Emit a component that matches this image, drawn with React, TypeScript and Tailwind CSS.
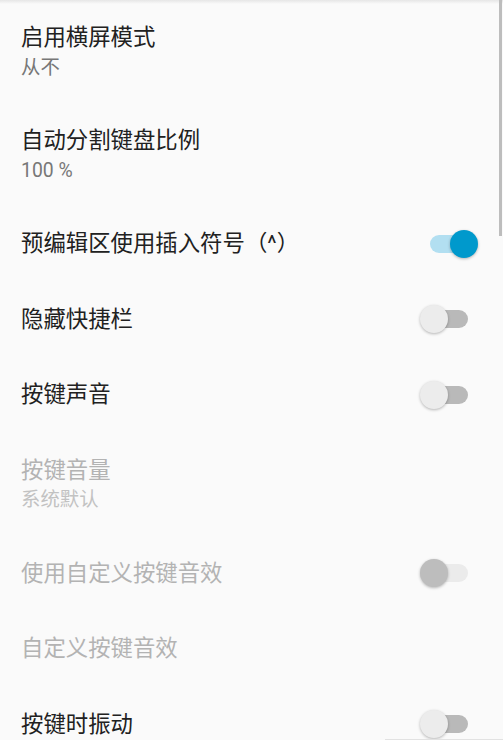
import React from "react";

type SwitchProps = { on?: boolean; disabled?: boolean };

function Switch({ on = false, disabled = false }: SwitchProps) {
  let track = "bg-[#b9b9b9]";
  let thumb = "bg-[#ececec]";
  if (on) {
    track = "bg-[#b2dff1]";
    thumb = "bg-[#0099cc]";
  } else if (disabled) {
    track = "bg-[#ebebeb]";
    thumb = "bg-[#bdbdbd]";
  }
  return (
    <div className="relative w-[58px] h-[28px] shrink-0">
      <div className={`absolute left-[10px] top-[5px] w-[38px] h-[18px] rounded-full ${track}`} />
      <div
        className={`absolute top-0 w-[28px] h-[28px] rounded-full shadow-[0_1px_3px_rgba(0,0,0,0.28)] ${thumb} ${
          on ? "left-[30px]" : "left-0"
        }`}
      />
    </div>
  );
}

type RowProps = {
  title: string;
  summary?: string;
  disabled?: boolean;
  toggle?: "on" | "off";
};

function Row({ title, summary, disabled = false, toggle }: RowProps) {
  return (
    <div className="flex items-center pl-[21px] pr-[25px] py-[22px]">
      <div className="flex-1 min-w-0 flex flex-col">
        <div
          className={`text-[22.4px] leading-[31.5px] ${disabled ? "text-[#b3b3b3]" : "text-[#212121]"}`}
        >
          {title}
        </div>
        {summary && (
          <div
            className={`text-[19.4px] leading-[27.5px] ${disabled ? "text-[#c2c2c2]" : "text-[#777777]"}`}
          >
            {summary}
          </div>
        )}
      </div>
      {toggle && <Switch on={toggle === "on"} disabled={disabled} />}
    </div>
  );
}

export default function App() {
  return (
    <div
      className="relative w-[503px] h-[740px] overflow-hidden bg-[#fafafa]"
      style={{ fontFamily: "Roboto, 'Noto Sans CJK SC', 'Noto Sans', sans-serif" }}
    >
      <div className="flex flex-col">
        <Row title="启用横屏模式" summary="从不" />
        <Row title="自动分割键盘比例" summary="100 %" />
        <Row title="预编辑区使用插入符号（^）" toggle="on" />
        <Row title="隐藏快捷栏" toggle="off" />
        <Row title="按键声音" toggle="off" />
        <Row title="按键音量" summary="系统默认" disabled />
        <Row title="使用自定义按键音效" toggle="off" disabled />
        <Row title="自定义按键音效" disabled />
        <Row title="按键时振动" toggle="off" />
      </div>
      <div className="absolute left-0 top-0 w-full h-[4px] bg-gradient-to-b from-[#e6e6e6] to-transparent" />
      <div className="absolute right-[1px] top-0 w-[3px] h-[236px] bg-[#bdbdbd]" />
      <div className="absolute left-[385px] right-0 bottom-0 h-[1px] bg-[#e2e2e2]" />
    </div>
  );
}
